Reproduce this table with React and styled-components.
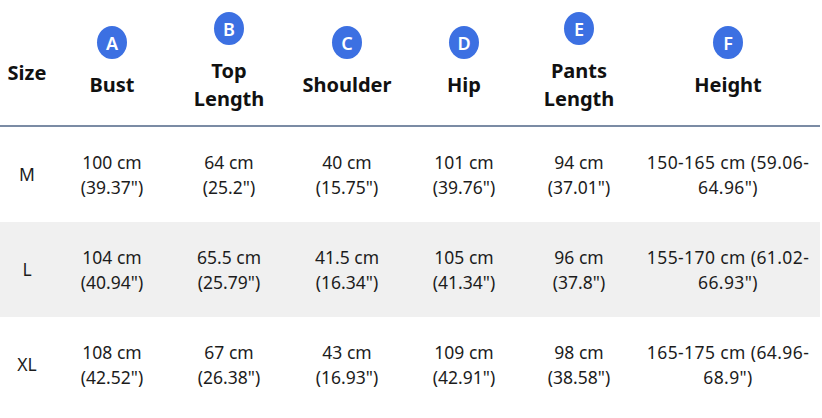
import React from 'react';
import styled, { createGlobalStyle } from 'styled-components';

const GlobalStyle = createGlobalStyle`
  body {
    margin: 0;
    background: #ffffff;
    font-family: "Noto Sans", "Open Sans", sans-serif;
    color: #1c1c1c;
  }
`;

const columns = [
  { key: 'bust', letter: 'A', title: ['Bust'] },
  { key: 'top', letter: 'B', title: ['Top', 'Length'] },
  { key: 'shoulder', letter: 'C', title: ['Shoulder'] },
  { key: 'hip', letter: 'D', title: ['Hip'] },
  { key: 'pants', letter: 'E', title: ['Pants', 'Length'] },
  { key: 'height', letter: 'F', title: ['Height'] },
];

const rows = [
  {
    size: 'M',
    bust: ['100 cm', '(39.37")'],
    top: ['64 cm', '(25.2")'],
    shoulder: ['40 cm', '(15.75")'],
    hip: ['101 cm', '(39.76")'],
    pants: ['94 cm', '(37.01")'],
    height: ['150-165 cm (59.06-', '64.96")'],
  },
  {
    size: 'L',
    bust: ['104 cm', '(40.94")'],
    top: ['65.5 cm', '(25.79")'],
    shoulder: ['41.5 cm', '(16.34")'],
    hip: ['105 cm', '(41.34")'],
    pants: ['96 cm', '(37.8")'],
    height: ['155-170 cm (61.02-', '66.93")'],
  },
  {
    size: 'XL',
    bust: ['108 cm', '(42.52")'],
    top: ['67 cm', '(26.38")'],
    shoulder: ['43 cm', '(16.93")'],
    hip: ['109 cm', '(42.91")'],
    pants: ['98 cm', '(38.58")'],
    height: ['165-175 cm (64.96-', '68.9")'],
  },
];

const App = () => {
  return (
    <>
      <GlobalStyle />
      <Table>
        <HeaderRow>
          <SizeHead>Size</SizeHead>
          {columns.map(col => (
            <HeadCell key={col.key}>
              <Badge>{col.letter}</Badge>
              <HeadTitle>
                {col.title.map(line => (
                  <span key={line}>{line}</span>
                ))}
              </HeadTitle>
            </HeadCell>
          ))}
        </HeaderRow>
        {rows.map((row, i) => (
          <BodyRow key={row.size} shaded={i % 2 === 1}>
            <Cell>{row.size}</Cell>
            {columns.map(col => (
              <Cell key={col.key} wide={col.key === 'height'}>
                {row[col.key].map(line => (
                  <span key={line}>{line}</span>
                ))}
              </Cell>
            ))}
          </BodyRow>
        ))}
      </Table>
    </>
  );
};

const Table = styled.div`
  width: 820px;
  display: flex;
  flex-direction: column;
`;

const gridCols = '54px 116px 118px 118px 116px 114px 184px';

const HeaderRow = styled.div`
  display: grid;
  grid-template-columns: ${gridCols};
  height: 125px;
  border-bottom: 2px solid #7b8ba4;
`;

const HeadCell = styled.div`
  display: flex;
  flex-direction: column;
  align-items: center;
  justify-content: center;
  gap: 12px;
`;

const SizeHead = styled.div`
  display: flex;
  align-items: center;
  justify-content: center;
  padding-top: 20px;
  font-size: 20px;
  font-weight: 700;
  color: #111111;
`;

const Badge = styled.div`
  width: 30px;
  height: 33px;
  border-radius: 50%;
  background: #3c70e2;
  color: #ffffff;
  font-size: 18px;
  font-weight: 600;
  line-height: 1;
  display: flex;
  align-items: center;
  justify-content: center;
`;

const HeadTitle = styled.div`
  display: flex;
  flex-direction: column;
  align-items: center;
  font-size: 20px;
  font-weight: 700;
  line-height: 28px;
  color: #111111;
`;

const BodyRow = styled.div`
  display: grid;
  grid-template-columns: ${gridCols};
  height: 95px;
  background: ${props => (props.shaded ? '#f0f0f0' : '#ffffff')};
`;

const Cell = styled.div`
  display: flex;
  flex-direction: column;
  align-items: center;
  justify-content: center;
  text-align: center;
  font-size: 17.5px;
  line-height: 25px;
  letter-spacing: ${props => (props.wide ? '0.4px' : '0')};
  color: #1c1c1c;
`;

export default App;
